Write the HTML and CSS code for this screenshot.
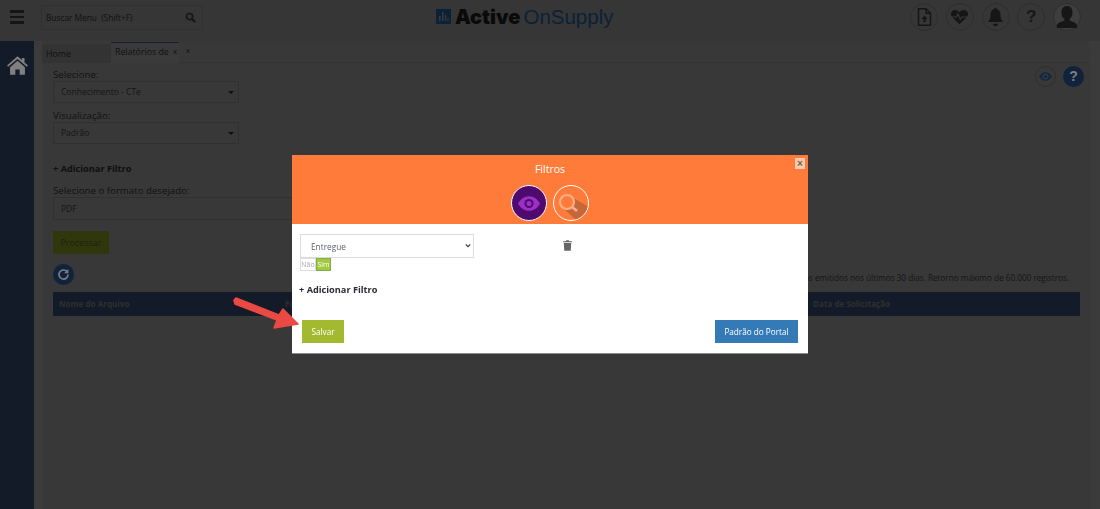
FILE: index.html
```html
<!DOCTYPE html>
<html lang="pt-BR">
<head>
<meta charset="utf-8">
<title>Active OnSupply</title>
<link rel="stylesheet" href="styles.css">
</head>
<body>
<header class="topbar">
  <div class="burger"><span></span><span></span><span></span></div>
  <div class="search">
    <span>Buscar Menu &nbsp;(Shift+F)</span>
    <svg class="search-icon" viewBox="0 0 12 12" width="11" height="11"><circle cx="5" cy="5" r="3.4" fill="none" stroke="#161616" stroke-width="1.8"/><path d="M7.6 7.6 11 11" stroke="#161616" stroke-width="2.2"/></svg>
  </div>
  <div class="logo">
    <svg viewBox="0 0 15 15" width="15" height="15"><rect width="15" height="15" fill="#0b2136"/><path d="M3 12V7h1.6v5zM6 12V3h1.6v9zM9 12V5.500h1.200V12zM11.400 12V9h1.200v3z" fill="#383838"/></svg>
    <b>Active</b><span>OnSupply</span>
  </div>
  <nav class="top-icons">
    <div class="round"><svg viewBox="0 0 20 24" width="15" height="18"><path d="M2 1h10l6 6v16H2z" fill="none" stroke="#161616" stroke-width="2"/><path d="M12 1v6h6" fill="none" stroke="#161616" stroke-width="2"/><path d="M10 10l-4 4.500h2.500V19h3v-4.500H14z" fill="#161616"/></svg></div>
    <div class="round"><svg viewBox="0 0 24 20" width="19" height="16"><path d="M12 19 2.500 10C-.5 6.500 2 1 6.500 1 9 1 11 2.500 12 4c1-1.500 3-3 5.500-3C22 1 24.500 6.500 21.500 10z" fill="#161616"/><path d="M1 10h7l2-4 3 7 2-3h8" fill="none" stroke="#383838" stroke-width="1.400"/></svg></div>
    <div class="round"><svg viewBox="0 0 20 24" width="17" height="20"><path d="M10 1c1 0 1.500.7 1.500 1.500C15 3.500 16 7 16 10c0 4 1.500 6 3 8H1c1.500-2 3-4 3-8 0-3 1-6.500 4.500-7.500C8.500 1.700 9 1 10 1z" fill="#161616"/><path d="M7 20h6c0 2-1.300 3-3 3s-3-1-3-3z" fill="#161616"/></svg></div>
    <div class="round q">?</div>
    <div class="round avatar"><svg viewBox="0 0 24 26" width="22" height="24"><path d="M12 1c4 0 6 3 6 7 0 3-1 5.500-3 7v2c3 1 7 2 8 5v3H1v-3c1-3 5-4 8-5v-2c-2-1.500-3-4-3-7 0-4 2-7 6-7z" fill="#161616"/></svg></div>
  </nav>
</header>

<div class="shell">
  <aside class="sidebar">
    <svg viewBox="0 0 24 22" width="21" height="20"><path d="M12 1 0 11.500l1.300 1.500L12 4l10.700 9 1.300-1.500-4-3.500V3h-3v2.400z" fill="#808080"/><path d="M3.500 13.500 12 6.200l8.500 7.300V22H14.500v-6h-5v6H3.500z" fill="#808080"/></svg>
  </aside>
  <main class="content">
    <div class="tabs">
      <div class="tab tab-home">Home</div>
      <div class="tab tab-active">Relatórios de <i>x</i></div>
      <div class="tab-close">x</div>
    </div>
    <div class="tools">
      <div class="tool-eye"><svg viewBox="0 0 24 16" width="13" height="9"><path d="M12 0C6.500 0 2.500 3.500 0 8c2.500 4.500 6.500 8 12 8s9.500-3.500 12-8c-2.500-4.500-6.500-8-12-8z" fill="#0e2a44"/><circle cx="12" cy="8" r="5.500" fill="#383838"/><circle cx="12" cy="8" r="3" fill="#0e2a44"/></svg></div>
      <div class="tool-help">?</div>
    </div>
    <section class="form">
      <label class="lbl">Selecione:</label>
      <div class="fake-select">Conhecimento - CTe</div>
      <label class="lbl lbl-second">Visualização:</label>
      <div class="fake-select">Padrão</div>
      <div class="add-filter">+ Adicionar Filtro</div>
      <label class="lbl">Selecione o formato desejado:</label>
      <div class="format">PDF</div>
      <div class="process">Processar</div>
      <div class="refresh-row">
        <div class="refresh"><svg viewBox="0 0 20 20" width="13" height="13"><path d="M16 6.500A7 7 0 1 0 17 10" fill="none" stroke="#808080" stroke-width="2.400"/><path d="M17.500 1.500v6.500h-6.500z" fill="#808080"/></svg></div>
        <p class="note">Exibe documentos emitidos nos últimos 30 dias. Retorno máximo de 60.000 registros.</p>
      </div>
      <div class="table-head">
        <span class="col-name">Nome do Arquivo</span>
        <span class="col-format">Formato</span>
        <span class="col-date">Data de Solicitação</span>
      </div>
    </section>
  </main>
</div>

<div class="modal">
  <div class="modal-head">
    <div class="modal-title">Filtros</div>
    <div class="modal-close">×</div>
    <div class="modal-tabs">
      <div class="mode mode-on"><svg viewBox="0 0 24 16" width="22" height="15"><path d="M12 0C6.500 0 2.500 3.500 0 8c2.500 4.500 6.500 8 12 8s9.500-3.500 12-8c-2.500-4.500-6.500-8-12-8z" fill="#9c2fc4"/><circle cx="12" cy="8" r="5" fill="#4f0a70"/><circle cx="12" cy="8" r="2.800" fill="#9c2fc4"/></svg></div>
      <div class="mode mode-off"><svg viewBox="0 0 36 36" width="36" height="36"><path d="M9 22 19 12 36 22V36H24z" fill="#c4683a"/><circle cx="14" cy="17" r="7" fill="#ff7b3a" stroke="#ffae88" stroke-width="2.200"/><path d="M19 22l5 4" stroke="#ffae88" stroke-width="2.800"/></svg></div>
    </div>
  </div>
  <div class="modal-body">
    <div class="filter-row">
      <div class="select-wrap">
        <select class="filter-select"><option>Entregue</option></select>
        <svg class="chevron" viewBox="0 0 8 6" width="6" height="5"><path d="M1 1.500 4 4.500 7 1.500" fill="none" stroke="#333" stroke-width="1.500"/></svg>
      </div>
      <svg class="trash" viewBox="0 0 14 16" width="9" height="11"><path d="M5 0h4l1 1.500h4V3H0V1.500h4zM1.200 4.200h11.600L12 16H2z" fill="#666"/></svg>
    </div>
    <div class="toggle"><span class="no">Não</span><span class="yes">Sim</span></div>
    <div class="modal-add">+ Adicionar Filtro</div>
    <div class="modal-actions">
      <button class="btn btn-save">Salvar</button>
      <button class="btn btn-portal">Padrão do Portal</button>
    </div>
  </div>
</div>

<svg class="arrow" viewBox="0 0 70 34" width="70" height="34"><path d="M2 3.500 2 3 4 1 47 18 51 12 66 27 42 31 45 23 3 7z" fill="#ea4a43" stroke="#ea4a43" stroke-width="1.500" stroke-linejoin="round"/></svg>
</body>
</html>
```

FILE: styles.css
```css
* { box-sizing: border-box; }
html, body { height: 100%; }
body {
  margin: 0;
  overflow: hidden;
  background: #3b3b3b;
  color: #111;
  font-family: "Open Sans", "Liberation Sans", sans-serif;
  font-size: 10px;
}
.topbar {
  height: 41px;
  display: flex;
  align-items: flex-start;
  background: #363636;
  position: relative;
}
.burger {
  width: 14px;
  margin: 10px 0 0 10px;
  display: flex;
  flex-direction: column;
  gap: 3px;
}
.burger span { height: 2.500px; background: #151515; }
.search {
  width: 162px;
  height: 25px;
  margin: 5px 0 0 17px;
  padding: 0 4px;
  border: 1px solid #303030;
  display: flex;
  align-items: center;
  justify-content: space-between;
  font-size: 8.300px;
  color: #111;
}
.search-icon { margin-right: 2px; }
.logo {
  margin: 5px 0 0 233px;
  display: flex;
  align-items: center;
  height: 23px;
  width: 180px;
  flex: none;
}
.logo b {
  margin-left: 4px;
  font-family: "Inter", sans-serif;
  font-weight: 900;
  font-size: 20px;
  color: #0a0a0a;
}
.logo span {
  margin-left: 3px;
  font-family: "Liberation Sans", sans-serif;
  font-size: 20.500px;
  color: #0b2136;
}
.top-icons {
  margin: 3px 0 0 auto;
  padding-right: 19px;
  display: flex;
  gap: 7.700px;
}
.round {
  width: 28px;
  height: 28px;
  border: 1px solid #2e2e2e;
  border-radius: 50%;
  display: flex;
  align-items: center;
  justify-content: center;
}
.q { font: 700 17px "Liberation Sans", sans-serif; color: #161616; }
.avatar { background: #3e3e3e; }
.shell { display: flex; height: 468px; }
.sidebar {
  width: 34px;
  flex: none;
  background: #141b28;
  padding: 14px 0 0 7px;
}
.content {
  position: relative;
  flex: 1;
  margin-left: 8px;
  margin-right: 10px;
  background: #383838;
}
.tabs {
  display: flex;
  align-items: flex-start;
  height: 22px;
  padding-top: 1px;
  border-bottom: 1px solid #323232;
  color: #111;
  font-size: 8.800px;
}
.tab-home {
  width: 69px;
  height: 19px;
  margin-top: 2px;
  padding: 4px 0 0 4px;
  background: #333;
}
.tab-active {
  width: 68px;
  height: 21px;
  padding: 3px 0 0 4px;
  border-top: 1px solid #141f33;
  background: #3a3a3a;
  white-space: nowrap;
}
.tab-active i { font-style: normal; font-size: 8px; position: relative; top: -1px; margin-left: 2px; }
.tab-close { margin: 2px 0 0 7px; font-size: 8px; }
.tools {
  position: absolute;
  top: 25px;
  right: 6px;
  display: flex;
  align-items: center;
  gap: 7px;
}
.tool-eye {
  width: 21px;
  height: 21px;
  border: 1px solid #2e2e2e;
  border-radius: 50%;
  display: flex;
  align-items: center;
  justify-content: center;
}
.tool-help {
  width: 21px;
  height: 21px;
  border-radius: 50%;
  background: #11233c;
  color: #808080;
  text-align: center;
  font: 700 14px/21px "Liberation Sans", sans-serif;
}
.form { padding: 6px 10px 0 11px; }
.lbl {
  display: block;
  height: 12px;
  font-size: 9.700px;
  line-height: 12px;
  color: #111;
}
.lbl-second { margin-top: 7px; }
.fake-select {
  position: relative;
  width: 186px;
  height: 22px;
  padding-left: 7px;
  border: 1px solid #303030;
  font-size: 8.500px;
  line-height: 20px;
  color: #151515;
}
.fake-select::after {
  content: "";
  position: absolute;
  right: 4px;
  top: 9px;
  border: 3px solid transparent;
  border-top-color: #0f0f0f;
}
.add-filter {
  margin-top: 18px;
  margin-bottom: 9px;
  height: 14px;
  font-weight: 700;
  font-size: 9.200px;
  line-height: 14px;
  color: #0f0f0f;
}
.format {
  width: 400px;
  height: 23px;
  padding-left: 7px;
  border: 1px solid #303030;
  font-size: 8.500px;
  line-height: 21px;
  color: #151515;
}
.process {
  width: 56px;
  height: 23px;
  margin-top: 11px;
  background: #31370d;
  color: #1e210b;
  text-align: center;
  font-size: 9px;
  line-height: 23px;
}
.refresh-row {
  display: flex;
  align-items: center;
  justify-content: space-between;
  height: 21px;
  margin-top: 10px;
  padding-right: 11px;
}
.refresh {
  width: 21px;
  height: 21px;
  border-radius: 50%;
  background: #11233c;
  display: flex;
  align-items: center;
  justify-content: center;
}
.note {
  margin: 6px 0 0;
  font-size: 8.200px;
  color: #151515;
}
.table-head {
  display: flex;
  height: 24px;
  margin-top: 7px;
  background: #141b28;
  color: #2f2f2f;
  font-weight: 700;
  font-size: 8.100px;
  line-height: 23px;
}
.col-name { width: 232px; padding-left: 6px; }
.col-format { width: 528px; }
.modal {
  position: fixed;
  left: 292px;
  top: 155px;
  width: 516px;
  height: 198px;
  background: #fff;
  box-shadow: 0 1px 0 #8a8a8a;
}
.modal-head {
  position: relative;
  height: 69px;
  background: #ff7b3a;
  padding-top: 6px;
  text-align: center;
}
.modal-title { color: #fff; font-size: 10.500px; line-height: 16px; }
.modal-close {
  position: absolute;
  top: 3px;
  right: 3px;
  width: 10px;
  height: 11px;
  background: #ffc9ad;
  color: #665;
  font: 700 10px/11px "Liberation Sans", sans-serif;
}
.modal-tabs {
  display: flex;
  justify-content: center;
  gap: 6px;
  margin-top: 8px;
}
.mode {
  width: 36px;
  height: 36px;
  border: 1.500px solid #fff;
  border-radius: 50%;
  display: flex;
  align-items: center;
  justify-content: center;
  overflow: hidden;
}
.mode-on { background: #4f0a70; }
.mode-off svg { flex: none; }
.modal-body { padding: 10px 10px 0 8px; }
.filter-row {
  display: flex;
  align-items: center;
  height: 24px;
}
.select-wrap { position: relative; height: 24px; }
.chevron {
  position: absolute;
  right: 3px;
  top: 9px;
  pointer-events: none;
}
.filter-select {
  appearance: none;
  width: 174px;
  height: 24px;
  padding-left: 10px;
  border: 1px solid #dcdcdc;
  border-radius: 0;
  background: #fff;
  font-family: "Open Sans", sans-serif;
  font-size: 8.300px;
  color: #5a5f6a;
}
.trash { margin: -2px 0 0 89px; }
.toggle {
  display: flex;
  width: 31px;
  height: 13px;
  font-size: 7px;
  line-height: 12px;
}
.no {
  width: 16px;
  border: 1px solid #ddd;
  color: #aaa;
  text-align: center;
}
.yes {
  width: 15px;
  background: #a3c93a;
  border: 1px solid #7fae4e;
  color: #fff;
  text-align: center;
}
.modal-add {
  margin: 12px 0 0 -1px;
  height: 14px;
  font-weight: 700;
  font-size: 9.200px;
  line-height: 14px;
  color: #2b2b33;
}
.modal-actions {
  display: flex;
  justify-content: space-between;
  margin-top: 23px;
  padding-left: 2px;
}
.btn {
  height: 23px;
  padding: 0;
  border: 0;
  color: #fff;
  font-family: "Open Sans", sans-serif;
  font-size: 8.200px;
}
.btn-save { width: 42px; background: #a3b92f; }
.btn-portal { width: 83px; background: #337ab7; }
.arrow {
  position: fixed;
  left: 232px;
  top: 297px;
}
```
